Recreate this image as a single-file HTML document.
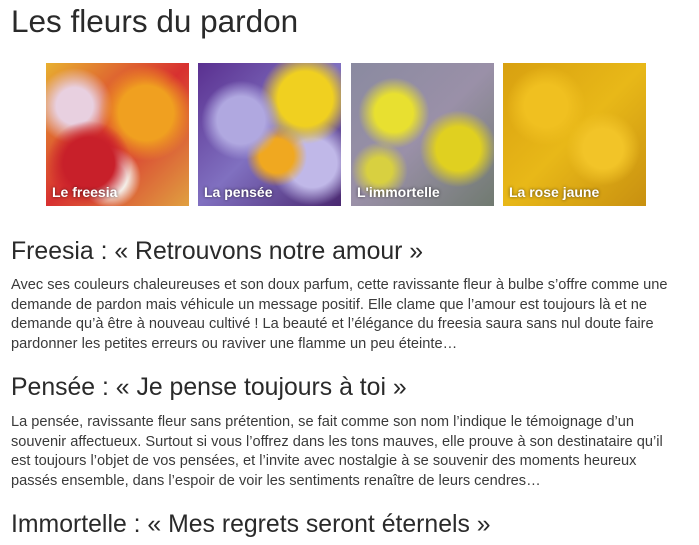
<!DOCTYPE html>
<html><head><meta charset="utf-8"><style>
body{margin:0;background:#fff;width:699px;height:545px;overflow:hidden;font-family:"Liberation Sans",sans-serif;color:#333}
h1{position:absolute;left:11px;top:3px;margin:0;font-weight:normal;font-size:31.5px;color:#2a2a2a}
.img{position:absolute;top:63px;width:143px;height:143px;overflow:hidden}
.img span{position:absolute;left:6px;bottom:6px;color:#fff;font-weight:bold;font-size:14px;text-shadow:0 0 3px rgba(0,0,0,.6)}
h2{position:absolute;left:11px;margin:0;font-weight:normal;font-size:24.8px;color:#2a2a2a;white-space:nowrap}
p{position:absolute;left:11px;margin:0;font-size:14.6px;line-height:19.5px;white-space:nowrap;color:#3a3a3a}
</style></head><body>
<h1>Les fleurs du pardon</h1>
<div class="img" style="left:46px;background:radial-gradient(circle at 30% 70%,#c8202a 0 18%,transparent 30%),radial-gradient(circle at 70% 35%,#f0a020 0 20%,transparent 35%),radial-gradient(circle at 45% 80%,#f4f0ea 0 12%,transparent 22%),radial-gradient(circle at 20% 30%,#e8d0e0 0 12%,transparent 25%),linear-gradient(135deg,#e8b030,#d83030 50%,#e0a040)"><span>Le freesia</span></div>
<div class="img" style="left:198px;background:radial-gradient(circle at 30% 40%,#b0a8e0 0 18%,transparent 30%),radial-gradient(circle at 75% 25%,#f0d020 0 18%,transparent 30%),radial-gradient(circle at 55% 65%,#f0a820 0 14%,transparent 25%),radial-gradient(circle at 80% 70%,#c0b8e8 0 16%,transparent 28%),linear-gradient(135deg,#5a3090,#8070c0 50%,#4a2870)"><span>La pensée</span></div>
<div class="img" style="left:351px;background:radial-gradient(circle at 30% 35%,#e8e030 0 14%,transparent 26%),radial-gradient(circle at 75% 60%,#e0d020 0 16%,transparent 28%),radial-gradient(circle at 20% 75%,#d8d040 0 8%,transparent 18%),linear-gradient(135deg,#8a8aa0,#9a90a8 50%,#707a70)"><span>L'immortelle</span></div>
<div class="img" style="left:503px;background:radial-gradient(circle at 30% 30%,#f0c020 0 15%,transparent 28%),radial-gradient(circle at 70% 60%,#f2c428 0 15%,transparent 28%),linear-gradient(135deg,#d8a010,#e8b818 50%,#c89010)"><span>La rose jaune</span></div>
<h2 style="top:238px">Freesia : « Retrouvons notre amour »</h2>
<p style="top:276px">Avec ses couleurs chaleureuses et son doux parfum, cette ravissante fleur à bulbe s’offre comme une<br>demande de pardon mais véhicule un message positif. Elle clame que l’amour est toujours là et ne<br>demande qu’à être à nouveau cultivé ! La beauté et l’élégance du freesia saura sans nul doute faire<br>pardonner les petites erreurs ou raviver une flamme un peu éteinte…</p>
<h2 style="top:374px">Pensée : « Je pense toujours à toi »</h2>
<p style="top:413px">La pensée, ravissante fleur sans prétention, se fait comme son nom l’indique le témoignage d’un<br>souvenir affectueux. Surtout si vous l’offrez dans les tons mauves, elle prouve à son destinataire qu’il<br>est toujours l’objet de vos pensées, et l’invite avec nostalgie à se souvenir des moments heureux<br>passés ensemble, dans l’espoir de voir les sentiments renaître de leurs cendres…</p>
<h2 style="top:511px">Immortelle : « Mes regrets seront éternels »</h2>
</body></html>
